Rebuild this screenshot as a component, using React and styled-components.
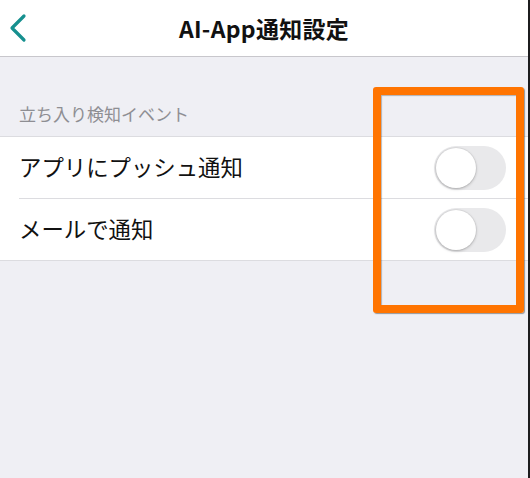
import React from "react";
import styled, { createGlobalStyle } from "styled-components";

const GlobalStyle = createGlobalStyle`
  html, body {
    margin: 0;
    padding: 0;
    background: #efeff4;
  }
  body {
    font-family: "Noto Sans CJK JP", "Noto Sans", sans-serif;
  }
`;

const Screen = styled.div`
  position: relative;
  width: 528px;
  height: 478px;
  background: #efeff4;
  border-right: 2px solid #1c1c1e;
  overflow: hidden;
`;

const NavBar = styled.header`
  height: 56px;
  background: #ffffff;
  border-bottom: 1px solid #c8c7cc;
  display: grid;
  grid-template-columns: 60px 1fr 60px;
  align-items: center;
`;

const BackButton = styled.button`
  all: unset;
  display: flex;
  align-items: center;
  padding-left: 8px;
  height: 100%;
`;

const Title = styled.h1`
  margin: 0;
  text-align: center;
  font-size: 23px;
  font-weight: 700;
  color: #111;
  letter-spacing: 0.3px;
`;

const SectionLabel = styled.div`
  padding: 46px 19px 12px;
  font-size: 17px;
  color: #8e8e93;
  line-height: 21px;
`;

const Group = styled.div`
  background: #ffffff;
  border-top: 1px solid #dcdce0;
  border-bottom: 1px solid #dcdce0;
`;

const Row = styled.div`
  height: 61px;
  display: flex;
  align-items: center;
  justify-content: space-between;
  padding: 0 22px 0 19px;
  & + & {
    border-top: 1px solid #dcdce0;
    margin-left: 19px;
    padding-left: 0;
  }
`;

const Label = styled.span`
  font-size: 22.4px;
  color: #111;
  margin-top: -3px;
`;

const Track = styled.div`
  width: 72px;
  height: 44px;
  border-radius: 22px;
  background: #e9e9eb;
  display: flex;
  align-items: center;
  padding: 0 2px;
  box-sizing: border-box;
`;

const Knob = styled.div`
  width: 40px;
  height: 40px;
  border-radius: 50%;
  background: #ffffff;
  box-shadow: 0 1px 3px rgba(0, 0, 0, 0.25), 0 0 0 1px rgba(0, 0, 0, 0.04);
`;

const Highlight = styled.div`
  position: absolute;
  left: 373px;
  top: 87px;
  width: 151px;
  height: 226px;
  box-sizing: border-box;
  border: 8px solid #ff7400;
  border-radius: 3px;
  box-shadow: 1px 1px 1px rgba(60, 60, 60, 0.5), inset 1px 1px 1px rgba(60, 60, 60, 0.35);
`;

const Toggle = () => (
  <Track>
    <Knob />
  </Track>
);

const settings = ["アプリにプッシュ通知", "メールで通知"];

export default function App() {
  return (
    <>
      <GlobalStyle />
      <Screen>
        <NavBar>
          <BackButton aria-label="戻る">
            <svg width="20" height="30" viewBox="0 0 20 30">
              <path
                d="M16 3 L4 15 L16 27"
                fill="none"
                stroke="#16908f"
                strokeWidth="3.2"
                strokeLinecap="round"
                strokeLinejoin="round"
              />
            </svg>
          </BackButton>
          <Title>AI-App通知設定</Title>
          <div />
        </NavBar>
        <SectionLabel>立ち入り検知イベント</SectionLabel>
        <Group>
          {settings.map((s) => (
            <Row key={s}>
              <Label>{s}</Label>
              <Toggle />
            </Row>
          ))}
        </Group>
        <Highlight />
      </Screen>
    </>
  );
}
